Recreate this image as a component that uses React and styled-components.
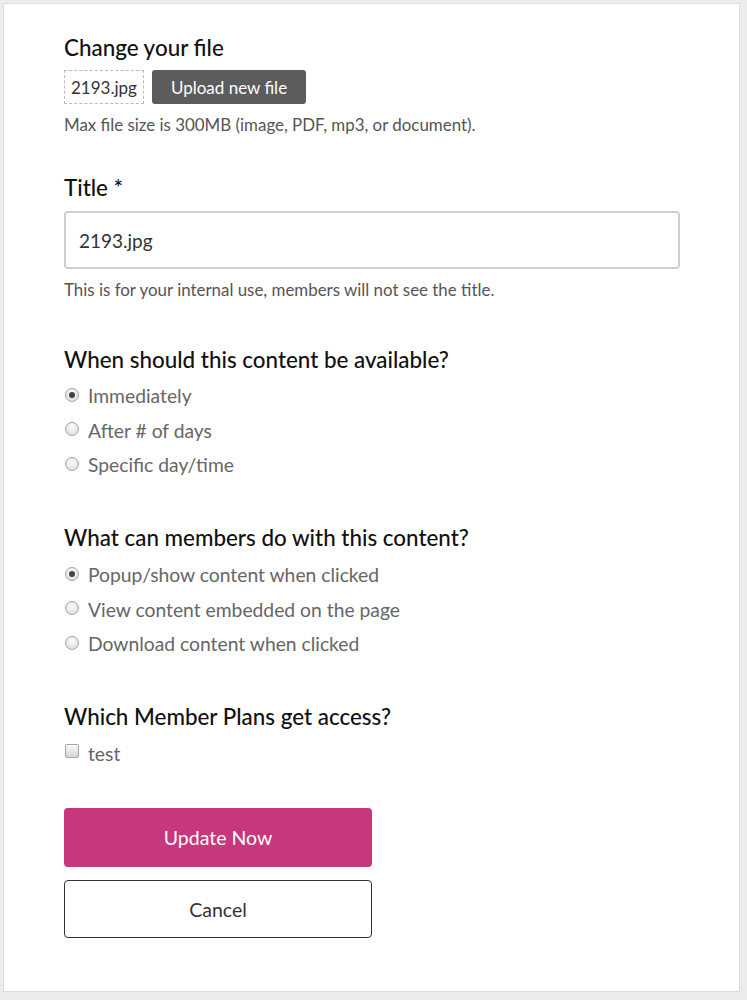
import React from 'react';
import styled, { createGlobalStyle } from 'styled-components';

const GlobalStyle = createGlobalStyle`
  html, body {
    margin: 0;
    padding: 0;
    background: #ececec;
    font-family: Lato, "Open Sans", sans-serif;
  }
`;

const Page = styled.div`
  padding: 3px 7px 8px 3px;
  min-height: 1000px;
  box-sizing: border-box;
`;

const Card = styled.div`
  background: #fff;
  border: 1px solid #dcdcdc;
  padding: 30px 60px 53px 60px;
`;

const Section = styled.section`
  margin-bottom: ${(props) => props.mb || '0'};
`;

const Heading = styled.h2`
  margin: 0 0 ${(props) => props.mb || '8px'};
  font-size: 22.4px;
  font-weight: 500;
  color: #111;
  line-height: 28px;
`;

const FileRow = styled.div`
  display: flex;
  align-items: center;
  gap: 8px;
`;

const FileName = styled.div`
  border: 1px dashed #bbb;
  height: 32px;
  padding: 0 6px;
  display: flex;
  align-items: center;
  font-size: 17px;
  color: #333;
`;

const UploadButton = styled.button`
  background: #5c5c5c;
  color: #fff;
  border: none;
  border-radius: 3px;
  height: 34px;
  padding: 0 19px;
  font-family: inherit;
  font-size: 17px;
`;

const Help = styled.p`
  margin: ${(props) => props.mt || '10px'} 0 0;
  font-size: 16.9px;
  color: #555;
  line-height: 22px;
`;

const TextInput = styled.input`
  display: block;
  box-sizing: border-box;
  width: 616px;
  height: 58px;
  border: 2px solid #cfcfcf;
  border-radius: 4px;
  padding: 0 13px;
  font-family: inherit;
  font-size: 19px;
  color: #333;
  outline: none;
`;

const OptionList = styled.div`
  display: flex;
  flex-direction: column;
  gap: 10.5px;
`;

const Option = styled.label`
  display: flex;
  align-items: center;
  gap: 9px;
  font-size: 19.3px;
  color: #666;
  line-height: 24px;
`;

const Radio = styled.span`
  flex: none;
  width: 14px;
  height: 14px;
  border-radius: 50%;
  box-sizing: border-box;
  border: 1px solid #a4a4a4;
  background: radial-gradient(circle at 50% 35%, #fdfdfd 0%, #d6d6d6 100%);
  display: flex;
  align-items: center;
  justify-content: center;
  margin-left: 1px;
  margin-top: -3px;

  &::after {
    content: '';
    width: 6px;
    height: 6px;
    border-radius: 50%;
    background: ${(props) => (props.checked ? '#444' : 'transparent')};
  }
`;

const Box = styled.span`
  flex: none;
  width: 14px;
  height: 14px;
  box-sizing: border-box;
  border: 1px solid #a4a4a4;
  border-radius: 2px;
  background: linear-gradient(#fbfbfb, #d6d6d6);
  margin-left: 1px;
  margin-top: -6px;
`;

const Actions = styled.div`
  display: flex;
  flex-direction: column;
  gap: 13px;
  width: 308px;
`;

const Button = styled.button`
  height: ${(props) => (props.primary ? '59px' : '58px')};
  border-radius: 4px;
  font-family: inherit;
  font-size: 19.5px;
  background: ${(props) => (props.primary ? '#c6377c' : '#fff')};
  color: ${(props) => (props.primary ? '#fff' : '#333')};
  border: ${(props) => (props.primary ? 'none' : '1px solid #333')};
`;

const RadioGroup = ({ options, checked }) => (
  <OptionList>
    {options.map((label, idx) => (
      <Option key={label}>
        <Radio checked={idx === checked} />
        {label}
      </Option>
    ))}
  </OptionList>
);

export default function App() {
  return (
    <Page>
      <GlobalStyle />
      <Card>
        <Section mb="38px">
          <Heading mb="8px">Change your file</Heading>
          <FileRow>
            <FileName>2193.jpg</FileName>
            <UploadButton>Upload new file</UploadButton>
          </FileRow>
          <Help mt="10px">Max file size is 300MB (image, PDF, mp3, or document).</Help>
        </Section>

        <Section mb="45px">
          <Heading mb="9px">Title *</Heading>
          <TextInput defaultValue="2193.jpg" />
          <Help mt="10px">This is for your internal use, members will not see the title.</Help>
        </Section>

        <Section mb="47px">
          <Heading mb="10px">When should this content be available?</Heading>
          <RadioGroup
            checked={0}
            options={['Immediately', 'After # of days', 'Specific day/time']}
          />
        </Section>

        <Section mb="47px">
          <Heading mb="11px">What can members do with this content?</Heading>
          <RadioGroup
            checked={0}
            options={[
              'Popup/show content when clicked',
              'View content embedded on the page',
              'Download content when clicked',
            ]}
          />
        </Section>

        <Section mb="42px">
          <Heading mb="11px">Which Member Plans get access?</Heading>
          <Option>
            <Box />
            test
          </Option>
        </Section>

        <Actions>
          <Button primary>Update Now</Button>
          <Button>Cancel</Button>
        </Actions>
      </Card>
    </Page>
  );
}
